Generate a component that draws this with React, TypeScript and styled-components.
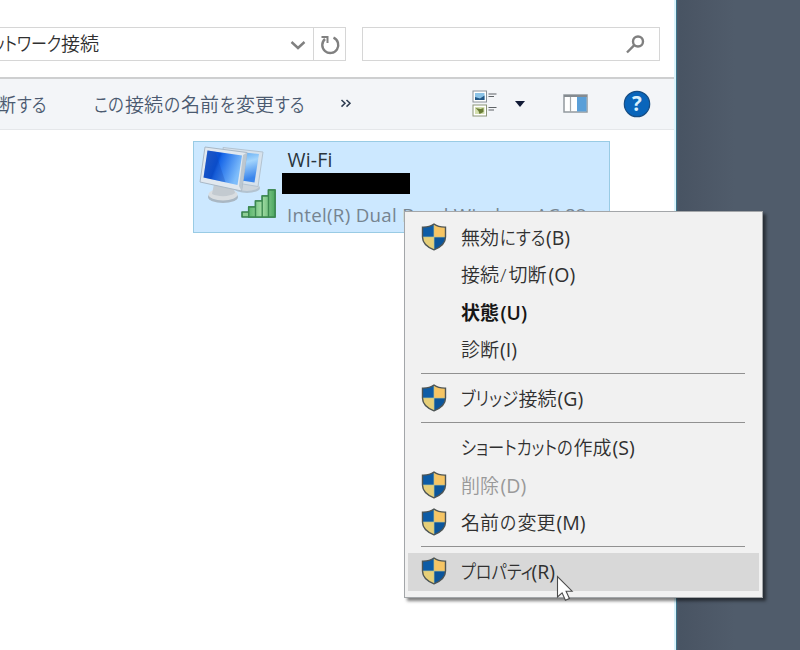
import React from "react";
import styled, { createGlobalStyle } from "styled-components";

const Global = createGlobalStyle`
  * { box-sizing: border-box; }
  html, body { margin: 0; padding: 0; }
  body { width: 800px; height: 650px; overflow: hidden; background: #505c6b; }
`;

const Desktop = styled.div`
  position: relative;
  width: 800px;
  height: 650px;
  overflow: hidden;
  background: linear-gradient(90deg, #505c6b 676px, #485463 680px, #4b5665 695px, #505c6b 735px);
  font-family: "Open Sans", "Noto Sans CJK JP", sans-serif;
  font-size: 19px;
  color: #303030;
`;

const Window = styled.main`
  width: 677px;
  height: 650px;
  background: #fff;
  border-right: 1px solid #3d758c;
  box-shadow: inset -2px 0 #d9f3fb;
  display: flex;
  flex-direction: column;
`;

const AddressRow = styled.header`
  height: 79px;
  padding: 27px 0 0;
  display: flex;
  border-bottom: 2px solid #cecfd0;
  margin-right: 2px;
`;

const AddressBox = styled.div`
  width: 346px;
  height: 34px;
  border: 1px solid #d6d6d6;
  border-left: 0;
  display: flex;
  align-items: center;
`;

const AddressText = styled.div`
  flex: 1;
  display: flex;
  margin-left: -8px;
`;

const RefreshCell = styled.div`
  width: 32px;
  height: 100%;
  border-left: 1px solid #d6d6d6;
  display: flex;
  align-items: center;
  justify-content: center;
`;

const ChevronCell = styled.div`
  width: 31px;
  display: flex;
  justify-content: center;
`;

const SearchBox = styled.div`
  width: 298px;
  height: 34px;
  margin-left: 16px;
  border: 1px solid #d6d6d6;
  display: flex;
  align-items: center;
  justify-content: flex-end;
  padding-right: 13px;
`;

const Toolbar = styled.nav`
  height: 51px;
  margin-right: 2px;
  background: #f3f5f8;
  border-bottom: 1px solid #e5e7ea;
  display: flex;
  align-items: center;
  color: #4b5a70;
`;

const ToolText = styled.div<{ $gap: number }>`
  display: flex;
  margin-left: ${(p) => p.$gap}px;
  padding-top: 1px;
`;

const More = styled.div`
  width: 20px;
  margin-left: 35px;
  display: flex;
`;

const ToolIcons = styled.div`
  display: flex;
  align-items: center;
  margin-left: auto;
  padding-right: 23px;
`;

const ToolIcon = styled.div<{ $gap: number }>`
  display: flex;
  margin-left: ${(p) => p.$gap}px;
`;

const Run = styled.span<{ $w?: number; $kana?: boolean; $strong?: boolean }>`
  display: inline-block;
  white-space: nowrap;
  line-height: 28px;
  width: ${(p) => (p.$w ? `${p.$w}px` : "auto")};
  font-feature-settings: ${(p) => (p.$kana ? '"palt"' : "normal")};
  font-weight: ${(p) => (p.$strong ? 700 : 350)};
`;

const LatinRun = styled.span<{ $strong?: boolean }>`
  line-height: 28px;
  white-space: nowrap;
  font-size: ${(p) => (p.$strong ? "19.3px" : "19.5px")};
  font-weight: ${(p) => (p.$strong ? 650 : 380)};
`;

const Squeeze = styled.span<{ $x: number }>`
  display: inline-block;
  transform: scaleX(${(p) => p.$x});
  transform-origin: left center;
`;

const Adapter = styled.section`
  width: 417px;
  height: 92px;
  margin: 11px 0 0 193px;
  background: #cce8ff;
  border: 1px solid #99cbe4;
  display: flex;
`;

const AdapterArt = styled.div`
  width: 88px;
  flex: none;
`;

const AdapterInfo = styled.div`
  display: flex;
  flex-direction: column;
  min-width: 0;
`;

const AdapterName = styled.div`
  padding-left: 5.5px;
  height: 31px;
  line-height: 36px;
  font-size: 19.5px;
  letter-spacing: 0.2px;
  color: #2a343c;
`;

const Redacted = styled.div`
  width: 128px;
  height: 21px;
  background: #000;
`;

const Device = styled.div`
  padding-left: 5px;
  margin-top: 7px;
  line-height: 28px;
  font-size: 18.7px;
  letter-spacing: 0.3px;
  white-space: nowrap;
  color: #768490;
`;

const Menu = styled.div`
  position: absolute;
  left: 404px;
  top: 211px;
  width: 359px;
  height: 387px;
  padding: 7.4px 3.5px 0 3px;
  background: #f1f1f1;
  border: 1px solid #a3a6a9;
  box-shadow: 3px 3px 3px rgba(0, 0, 0, 0.5);
`;

const Item = styled.div<{ $active?: boolean; $disabled?: boolean }>`
  height: 37.25px;
  display: flex;
  align-items: center;
  background: ${(p) => (p.$active ? "#d8d8d8" : "transparent")};
  color: ${(p) => (p.$disabled ? "#999" : "#303030")};
`;

const StrongItem = styled(Item)`
  color: #161616;
`;

const IconSlot = styled.div`
  width: 53px;
  flex: none;
  padding: 0 0 2px 12.5px;
  display: flex;
`;

const Separator = styled.div`
  height: 12px;
  margin: 0 14px 0 13px;
  padding-top: 4.6px;
  &::before {
    content: "";
    display: block;
    height: 1px;
    background: #919191;
  }
`;

const Pointer = styled.svg`
  position: absolute;
  left: 556px;
  top: 575px;
`;

const Shield = () => (
  <svg width="26" height="28" viewBox="0 0 26 28">
    <path d="M13 1C9.5 3.6 5.4 4.2 1.5 4.1V14c0 6.6 4.9 10.2 11.5 12.8V14z" fill="#0d5ca6" />
    <path d="M13 1c3.5 2.6 7.6 3.2 11.5 3.1V14H13z" fill="#f6c564" />
    <path d="M1.5 14H13v12.8C6.4 24.2 1.5 20.6 1.5 14z" fill="#e6cf78" />
    <path d="M24.5 14H13v12.8C19.6 24.2 24.5 20.6 24.5 14z" fill="#0b559b" />
    <path d="M13 1.2v25M1.5 14h23" stroke="#b7c397" strokeWidth=".7" />
    <path d="M13 1C9.5 3.6 5.4 4.2 1.5 4.1V14c0 6.6 4.9 10.2 11.5 12.8C19.6 24.2 24.5 20.6 24.5 14V4.1C20.6 4.2 16.5 3.6 13 1z" fill="none" stroke="#4f5655" strokeWidth="1.4" />
  </svg>
);

const NetworkIcon = () => (
  <svg width="88" height="90" viewBox="194 142 88 90">
    <defs>
      <linearGradient id="screen" x1="0" y1="0" x2="1" y2=".35">
        <stop offset="0" stopColor="#2b64cf" />
        <stop offset=".42" stopColor="#0750d4" />
        <stop offset=".48" stopColor="#1766e8" />
        <stop offset="1" stopColor="#7ebdfb" />
      </linearGradient>
      <linearGradient id="screenBack" x1="0" y1="0" x2=".3" y2="1">
        <stop offset="0" stopColor="#3a92ed" />
        <stop offset=".5" stopColor="#a4d5fc" />
        <stop offset="1" stopColor="#3b86ec" />
      </linearGradient>
      <linearGradient id="bars" x1="0" y1="0" x2="1" y2="0">
        <stop offset="0" stopColor="#5cb46d" />
        <stop offset=".5" stopColor="#a2dca4" />
        <stop offset="1" stopColor="#4aa65f" />
      </linearGradient>
    </defs>
    <ellipse cx="247" cy="188" rx="13" ry="5" fill="#b3c3d0" />
    <ellipse cx="247" cy="186" rx="12" ry="5" fill="#cdd5dc" />
    <path d="M223 147.5l40 4.500-5 34.500-30-5z" fill="#d7e2ec" stroke="#b3c3d1" />
    <path d="M226 150.5l33 3.500-4.500 28.500-26-4z" fill="url(#screenBack)" />
    <ellipse cx="223" cy="197" rx="15" ry="6" fill="#a9b7c3" />
    <ellipse cx="223" cy="194.5" rx="14.5" ry="6" fill="#d9dde0" />
    <path d="M214 184h19l2 9c-5 4-17 4-23 1z" fill="#c3cad0" />
    <path d="M205 147l42 5.500-5.500 38.500-41.500-9z" fill="#e1e8ef" stroke="#a9b8c6" />
    <path d="M243 155l4-2.500-5.500 38.500-2.500-5z" fill="#bcc7d0" />
    <path d="M207.500 150.500l34.500 5-4.500 29.500-34-7.500z" fill="url(#screen)" />
    <path d="M207.500 150.500l8 1.200 10 30.500-22-4.700z" fill="#1745ad" opacity=".28" />
    <path d="M242 217v-5h6.700v-5h6.800v-6h6.700v-5h6.300v-6h6.500v27z" fill="#8dce95" stroke="#357f4b" strokeWidth="1.6" strokeLinejoin="round" />
    <path d="M248.700 207h6.800v10h-6.800zM255.500 201h6.700v16h-6.700zM262.200 196h6.300v21h-6.300zM268.500 190h6.500v27h-6.500z" fill="url(#bars)" stroke="#3c8850" strokeWidth="1.4" />
  </svg>
);

const ViewIcon = () => (
  <svg width="26" height="28" viewBox="0 0 26 28">
    <rect x="1" y="1" width="13.5" height="11" fill="#fff" stroke="#8b9297" />
    <rect x="3" y="3" width="9.5" height="7" fill="#8bc3e7" />
    <path d="M3 10V7l5 1.500 4.500-3V10z" fill="#245886" />
    <rect x="1" y="15" width="13.5" height="11" fill="#fff" stroke="#8c9579" />
    <rect x="3" y="17" width="9.5" height="7" fill="#d4dfae" />
    <path d="M3.500 18l5 1 3-1v4l-4 2-1-3z" fill="#697c35" />
    <path d="M16.500 4h8M16.500 6.500h5.500M16.500 17.500h8M16.500 20h5.500" stroke="#5e6367" strokeWidth="1.2" />
  </svg>
);

type Part = { t: string; w?: number; x?: number; kana?: boolean; latin?: boolean };

const Text = ({ parts, strong }: { parts: Part[]; strong?: boolean }) => (
  <>
    {parts.map((p, i) =>
      p.latin ? (
        <LatinRun key={i} $strong={strong}>{p.t}</LatinRun>
      ) : (
        <Run key={i} $w={p.w} $kana={p.kana} $strong={strong}>
          <Squeeze $x={p.x ?? 1}>{p.t}</Squeeze>
        </Run>
      )
    )}
  </>
);

type Entry = { parts: Part[]; shield?: boolean; strong?: boolean; disabled?: boolean; active?: boolean };

const groups: Entry[][] = [
  [
    { shield: true, parts: [{ t: "無効", w: 39 }, { t: "にする", w: 46, kana: true, x: 0.86 }, { t: "(B)", latin: true }] },
    { parts: [{ t: "接続", w: 39 }, { t: "/", w: 8.5 }, { t: "切断", w: 40 }, { t: "(O)", latin: true }] },
    { strong: true, parts: [{ t: "状態", w: 39.5 }, { t: "(U)", latin: true }] },
    { parts: [{ t: "診断", w: 39 }, { t: "(I)", latin: true }] },
  ],
  [{ shield: true, parts: [{ t: "ブリッジ", w: 57.5, kana: true, x: 0.87 }, { t: "接続", w: 39 }, { t: "(G)", latin: true }] }],
  [
    { parts: [{ t: "ショートカットの", w: 112.5, kana: true, x: 0.855 }, { t: "作成", w: 39 }, { t: "(S)", latin: true }] },
    { shield: true, disabled: true, parts: [{ t: "削除", w: 39.5 }, { t: "(D)", latin: true }] },
    { shield: true, parts: [{ t: "名前", w: 39 }, { t: "の", w: 17.5, kana: true, x: 0.88 }, { t: "変更", w: 39 }, { t: "(M)", latin: true }] },
  ],
  [{ shield: true, active: true, parts: [{ t: "プロパティ", w: 70.5, kana: true, x: 0.85 }, { t: "(R)", latin: true }] }],
];

export default function App() {
  return (
    <Desktop>
      <Global />
      <Window>
        <AddressRow>
          <AddressBox>
            <AddressText>
              <Text parts={[{ t: "ットワーク", w: 69, kana: true, x: 0.84 }, { t: "接続" }]} />
            </AddressText>
            <ChevronCell>
              <svg width="18" height="14" viewBox="0 0 18 14"><path d="M2.500 5l6.500 6 6.500-6" fill="none" stroke="#808080" strokeWidth="2.4" /></svg>
            </ChevronCell>
            <RefreshCell>
              <svg width="22" height="22" viewBox="0 0 22 22">
                <path d="M6 6a8 8 0 1 0 8.500-1.300" fill="none" stroke="#808080" strokeWidth="2.4" />
                <path d="M2.500 4H8.500v6" fill="none" stroke="#808080" strokeWidth="2" />
              </svg>
            </RefreshCell>
          </AddressBox>
          <SearchBox>
            <svg width="22" height="22" viewBox="0 0 22 22">
              <circle cx="14" cy="8.5" r="5" fill="none" stroke="#808080" strokeWidth="2.4" />
              <path d="M10.300 12.200L3 19.500" stroke="#808080" strokeWidth="2.4" />
            </svg>
          </SearchBox>
        </AddressRow>
        <Toolbar>
          <ToolText $gap={-3}><Text parts={[{ t: "断", w: 20 }, { t: "する", w: 30, kana: true, x: 0.86 }]} /></ToolText>
          <ToolText $gap={47}>
            <Text parts={[{ t: "この", w: 31, kana: true, x: 0.86 }, { t: "接続", w: 39 }, { t: "の", w: 17, kana: true, x: 0.88 }, { t: "名前", w: 39 }, { t: "を", w: 16, kana: true, x: 0.86 }, { t: "変更", w: 38.5 }, { t: "する", w: 30, kana: true, x: 0.86 }]} />
          </ToolText>
          <More>
            <svg width="12" height="12" viewBox="0 0 12 12"><path d="M1.500 2l3.500 3.300-3.500 3.300M6.500 2l3.500 3.300-3.500 3.300" fill="none" stroke="#2d3b50" strokeWidth="1.5" /></svg>
          </More>
          <ToolIcons>
            <ToolIcon $gap={0}><ViewIcon /></ToolIcon>
            <ToolIcon $gap={17}><svg width="10" height="6" viewBox="0 0 10 6"><path d="M0 0h10L5 6z" fill="#111a36" /></svg></ToolIcon>
            <ToolIcon $gap={38}>
              <svg width="25" height="20" viewBox="0 0 25 20">
                <rect x="1" y="1" width="23" height="17" fill="#fff" stroke="#92999e" strokeWidth="1.5" />
                <path d="M1 2h23" stroke="#858b90" strokeWidth="2" />
                <path d="M7.500 3v15" stroke="#a3a8ab" strokeWidth="1.2" />
                <rect x="14" y="3" width="9.5" height="14.5" fill="#5a9fd8" />
              </svg>
            </ToolIcon>
            <ToolIcon $gap={35}>
              <svg width="28" height="28" viewBox="0 0 28 28">
                <circle cx="14" cy="14" r="12.7" fill="#0965bb" stroke="#164d84" strokeWidth="1.2" />
                <text x="14" y="21" textAnchor="middle" fontFamily="Open Sans, sans-serif" fontWeight="700" fontSize="20.5" fill="#d9f0fc">?</text>
              </svg>
            </ToolIcon>
          </ToolIcons>
        </Toolbar>
        <Adapter>
          <AdapterArt><NetworkIcon /></AdapterArt>
          <AdapterInfo>
            <AdapterName>Wi-Fi</AdapterName>
            <Redacted />
            <Device>Intel(R) Dual Band Wireless-AC 82...</Device>
          </AdapterInfo>
        </Adapter>
      </Window>
      <Menu>
        {groups.map((group, g) => (
          <React.Fragment key={g}>
            {g > 0 && <Separator />}
            {group.map((item, i) => {
              const Row = item.strong ? StrongItem : Item;
              return (
                <Row key={i} $active={item.active} $disabled={item.disabled}>
                  <IconSlot>{item.shield && <Shield />}</IconSlot>
                  <Text parts={item.parts} strong={item.strong} />
                </Row>
              );
            })}
          </React.Fragment>
        ))}
      </Menu>
      <Pointer width="18" height="27" viewBox="0 0 18 27">
        <path d="M1.500 1.500v20.500l4.600-4.200 3.300 7.400 4-1.700-3.300-7.300h6z" fill="#fff" stroke="#4b4b4b" strokeWidth="1.1" />
      </Pointer>
    </Desktop>
  );
}
